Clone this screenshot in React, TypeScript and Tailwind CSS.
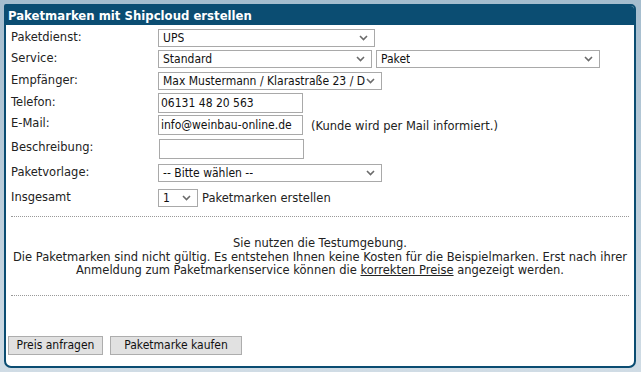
import React from "react";

const COND = { fontFamily: "'DejaVu Sans Condensed', 'DejaVu Sans', sans-serif" };

const Chevron = () => (
  <svg width="9" height="6" viewBox="0 0 9 6" className="shrink-0">
    <path d="M1 1 L4.5 4.5 L8 1" fill="none" stroke="#6b6b6b" strokeWidth="1.6" />
  </svg>
);

const Select = ({ w, text }: { w: string; text: string }) => (
  <div
    className={`${w} h-[18px] border border-[#a9a9a9] bg-white flex items-center justify-between pl-[4px] pr-[6px] overflow-hidden text-[12px]`}
    style={COND}
  >
    <span className="whitespace-nowrap overflow-hidden text-[#111]">{text}</span>
    <Chevron />
  </div>
);

const Input = ({ w, text }: { w: string; text?: string }) => (
  <div
    className={`${w} h-[20px] border border-[#a9a9a9] bg-white flex items-center pl-[2px] text-[#111] whitespace-nowrap overflow-hidden text-[12px]`}
    style={COND}
  >
    {text}
  </div>
);

export default function App() {
  return (
    <div
      className="w-[641px] h-[372px] p-[4px] bg-gradient-to-b from-[#a5bdce] to-[#d0dce5] text-[11.5px] text-[#222]"
      style={{ fontFamily: "'DejaVu Sans', sans-serif" }}
    >
      <div className="w-[632px] h-[364px] border-2 border-[#0b4d72] rounded-tr-[5px] rounded-b-[7px] rounded-tl-[2px] bg-white flex flex-col overflow-hidden">
        <div
          className="h-[19px] bg-[#0b4d72] text-white font-bold text-[13px] pl-[2px] flex items-center leading-none"
          style={COND}
        >
          Paketmarken mit Shipcloud erstellen
        </div>
        <div className="flex flex-col pt-[4px] pl-[5px]">
          <div className="flex h-[21px]">
            <div className="w-[147px]">Paketdienst:</div>
            <Select w="w-[217px]" text="UPS" />
          </div>
          <div className="flex h-[22px] gap-[4px]">
            <div className="w-[143px]">Service:</div>
            <Select w="w-[214px]" text="Standard" />
            <Select w="w-[224px]" text="Paket" />
          </div>
          <div className="flex h-[21px]">
            <div className="w-[147px]">Empfänger:</div>
            <Select w="w-[224px]" text="Max Mustermann / Klarastraße 23 / D" />
          </div>
          <div className="flex h-[22px]">
            <div className="w-[147px] pt-[1px]">Telefon:</div>
            <Input w="w-[145px]" text="06131 48 20 563" />
          </div>
          <div className="flex h-[24px] items-start">
            <div className="w-[147px]">E-Mail:</div>
            <Input w="w-[145px]" text="info@weinbau-online.de" />
            <div className="pl-[8px] pt-[3px]">(Kunde wird per Mail informiert.)</div>
          </div>
          <div className="flex h-[25px]">
            <div className="w-[148px]">Beschreibung:</div>
            <Input w="w-[145px]" />
          </div>
          <div className="flex h-[25px]">
            <div className="w-[147px]">Paketvorlage:</div>
            <Select w="w-[224px]" text="-- Bitte wählen --" />
          </div>
          <div className="flex h-[20px] items-start">
            <div className="w-[147px]">Insgesamt</div>
            <Select w="w-[40px]" text="1" />
            <div className="pl-[4px] pt-[1px]">Paketmarken erstellen</div>
          </div>
        </div>
        <div className="mx-[5px] mt-[7px] border-t border-dotted border-[#999]" />
        <div className="pt-[20px] text-center leading-[13.5px]">
          <div>Sie nutzen die Testumgebung.</div>
          <div>Die Paketmarken sind nicht gültig. Es entstehen Ihnen keine Kosten für die Beispielmarken. Erst nach ihrer</div>
          <div>
            Anmeldung zum Paketmarkenservice können die <span className="underline">korrekten Preise</span> angezeigt werden.
          </div>
        </div>
        <div className="mx-[5px] mt-[17px] border-t border-dotted border-[#999]" />
        <div className="flex gap-[7px] pl-[2px] mt-[40px]" style={COND}>
          <button className="h-[19px] w-[95px] border border-[#adadad] bg-[#e1e1e1] text-[#111] text-[12px] leading-none">Preis anfragen</button>
          <button className="h-[19px] w-[132px] border border-[#adadad] bg-[#e1e1e1] text-[#111] text-[12px] leading-none">Paketmarke kaufen</button>
        </div>
      </div>
    </div>
  );
}
